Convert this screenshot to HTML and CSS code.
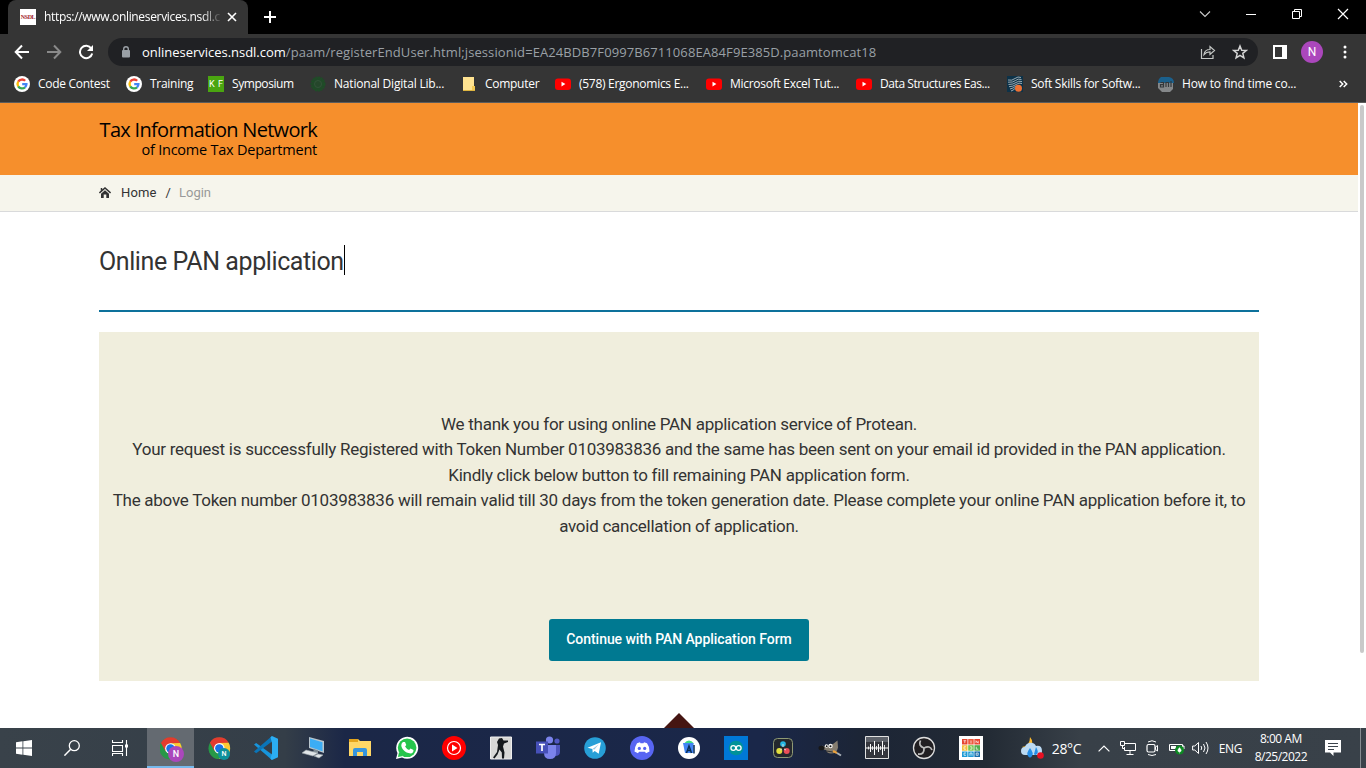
FILE: index.html
```html
<!DOCTYPE html>
<html lang="en">
<head>
<meta charset="utf-8">
<title>Online PAN application</title>
<link rel="stylesheet" href="styles.css">
</head>
<body>
<svg class="defs" width="0" height="0">
  <symbol id="google" viewBox="0 0 16 16"><circle cx="8" cy="8" r="8" fill="#fff"/><g fill="none" stroke-width="2.3"><path d="M11.2 4.8A4.5 4.5 0 0 0 4.2 5.7" stroke="#ea4335"/><path d="M4.2 5.7A4.5 4.5 0 0 0 4.2 10.3" stroke="#fbbc05"/><path d="M4.2 10.3A4.5 4.5 0 0 0 11 11.3" stroke="#34a853"/><path d="M11 11.3A4.5 4.5 0 0 0 12.4 8.2H8.2" stroke="#4285f4"/></g></symbol>
  <symbol id="youtube" viewBox="0 0 16 16"><rect y="2.5" width="16" height="11.5" rx="3" fill="#f00"/><path d="M6.5 5.8v4.6L10.4 8z" fill="#fff"/></symbol>
  <symbol id="chrome" viewBox="0 0 24 24"><circle cx="12" cy="12" r="11.5" fill="#279847"/><path d="M2 6.2A11.5 11.5 0 0 1 22 6.2L12 7 7 15z" fill="#e33b2e"/><path d="M22 6.2A11.5 11.5 0 0 1 12 23.5L17 14 12 6.4z" fill="#fcc934"/><circle cx="12" cy="12" r="5.6" fill="#fff"/><circle cx="12" cy="12" r="4.4" fill="#1a73e8"/></symbol>
</svg>

<header class="browser">
  <div class="tabstrip">
    <div class="tab">
      <span class="favicon">NSDL</span>
      <span class="tab-title">https://www.onlineservices.nsdl.c</span>
      <svg class="tab-close" width="10" height="10" viewBox="0 0 10 10"><path d="M1 1l8 8M9 1L1 9" stroke="#fff" stroke-width="1.6"/></svg>
    </div>
    <svg class="new-tab" width="12" height="12" viewBox="0 0 12 12"><path d="M6 0v12M0 6h12" stroke="#fff" stroke-width="2"/></svg>
    <div class="window-controls">
      <svg width="46" height="28" viewBox="0 0 46 28"><path d="M18 11.500l5 5 5-5" fill="none" stroke="#ccc" stroke-width="1.1"/></svg>
      <svg width="46" height="28" viewBox="0 0 46 28"><path d="M18 14.500h10" stroke="#fff"/></svg>
      <svg width="46" height="28" viewBox="0 0 46 28"><path d="M18.500 11.500h7v7h-7zM20.500 11.500v-2h7v7h-2" fill="none" stroke="#fff"/></svg>
      <svg width="46" height="28" viewBox="0 0 46 28"><path d="M18 9l10 10M28 9L18 19" stroke="#fff" stroke-width="1.2"/></svg>
    </div>
  </div>
  <div class="toolbar">
    <svg class="nav" width="16" height="16" viewBox="0 0 16 16"><path d="M15 8H2M8 1.500L1.700 8 8 14.500" fill="none" stroke="#fff" stroke-width="2"/></svg>
    <svg class="nav" width="16" height="16" viewBox="0 0 16 16"><path d="M1 8h13M8 1.500L14.300 8 8 14.500" fill="none" stroke="#8a8a8a" stroke-width="2"/></svg>
    <svg class="nav" width="16" height="16" viewBox="0 0 16 16"><path d="M13.300 4.500A6.200 6.200 0 1 0 14.200 9.500" fill="none" stroke="#fff" stroke-width="2"/><path d="M15 1v6H9z" fill="#fff"/></svg>
    <div class="omnibox">
      <svg width="10" height="12" viewBox="0 0 10 12"><rect x="1" y="4" width="8" height="7.500" rx="1" fill="#9aa0a6"/><path d="M2.700 5V3a2.300 2.300 0 0 1 4.600 0v2" fill="none" stroke="#9aa0a6" stroke-width="1.400"/></svg>
      <span class="url"><b>onlineservices.nsdl.com</b>/paam/registerEndUser.html;jsessionid=EA24BDB7F0997B6711068EA84F9E385D.paamtomcat18</span>
      <svg width="16" height="16" viewBox="0 0 16 16"><path d="M1.500 5v9.500H13V11M4 10.500C4.500 7 7 5.500 10 5.500V2.500l4.500 4-4.500 4V7.800C7 7.800 5.500 8.700 4 10.500z" fill="none" stroke="#c4c7c5" stroke-width="1.200"/></svg>
      <svg width="16" height="16" viewBox="0 0 16 16"><path d="M8 2l1.700 4.200 4.600.3-3.500 2.900 1.100 4.400L8 11.400l-3.900 2.400 1.100-4.400L1.700 6.500l4.600-.3z" fill="none" stroke="#d5d5d5" stroke-width="1.500"/></svg>
    </div>
    <svg class="side-panel" width="14" height="14" viewBox="0 0 14 14"><path d="M1 1h12v12H1z" fill="none" stroke="#fff" stroke-width="2"/><path d="M9 0h5v14H9z" fill="#fff"/></svg>
    <span class="avatar">N</span>
    <svg class="menu" width="4" height="16" viewBox="0 0 4 16"><g fill="#fff"><circle cx="2" cy="3" r="1.500"/><circle cx="2" cy="8" r="1.500"/><circle cx="2" cy="13" r="1.500"/></g></svg>
  </div>
  <nav class="bookmarks">
    <span class="bookmark"><svg><use href="#google"/></svg>Code Contest</span>
    <span class="bookmark"><svg><use href="#google"/></svg>Training</span>
    <span class="bookmark snug"><span class="kf">K F</span>Symposium</span>
    <span class="bookmark loose"><svg viewBox="0 0 16 16"><circle cx="8" cy="8" r="6" fill="#25472b" stroke="#1e4d27" stroke-width="3" stroke-dasharray="2 .5"/><circle cx="8" cy="8" r="3.500" fill="none" stroke="#315339"/></svg>National Digital Lib...</span>
    <span class="bookmark"><svg viewBox="0 0 16 16"><path d="M2 1h11v9h1v5H2z" fill="#ffe391"/><path d="M11 14v-4h3v4z" fill="#f3ca54"/><path d="M2 14.500h12" stroke="#dfb641"/></svg>Computer</span>
    <span class="bookmark"><svg><use href="#youtube"/></svg>(578) Ergonomics E...</span>
    <span class="bookmark"><svg><use href="#youtube"/></svg>Microsoft Excel Tut...</span>
    <span class="bookmark snug"><svg><use href="#youtube"/></svg>Data Structures Eas...</span>
    <span class="bookmark"><svg viewBox="0 0 16 16"><path d="M0 0h16v16H0z" fill="#0d3248"/><path d="M1 4q4 1 7-1.500t6-1M1 6.200q5 .5 7.500-1.700t6-1M1.500 8.500q5 0 7.500-2t6-1M2 10.700q4 0 7-2.200t6-1M3 13q3-.5 6-3M4 15q2-.5 4-2.500" fill="none" stroke="#a9b6bc" stroke-width=".9"/><circle cx="11.500" cy="12.300" r="3.500" fill="#f07132"/></svg>Soft Skills for Softw...</span>
    <span class="bookmark loose"><svg viewBox="0 0 16 16"><path d="M3 1h8q5 1 5 6H0q0-4 3-6z" fill="#1b608c"/><path d="M0 7h15v6l-3 3H4l-4-4z" fill="#85888a"/><path d="M2.500 6.500h3V11h-3V8.700h3M8 11V6.500h2.500V11M13 5v6" fill="none" stroke="#33383c" stroke-width="1.200"/></svg>How to find time co...</span>
    <svg class="overflow" viewBox="0 0 9 8"><path d="M.7 1L3.700 4 .7 7M4.700 1l3 3-3 3" fill="none" stroke="#fff" stroke-width="1.500"/></svg>
  </nav>
</header>

<div class="viewport">
  <main class="page">
    <div class="masthead">
      <div class="brand"><span class="brand-name">Tax Information Network</span><span class="brand-sub">of Income Tax Department</span></div>
    </div>
    <nav class="crumbs">
      <svg width="12" height="11" viewBox="0 0 12 11"><path d="M.4 6L6 1l5.600 5M2.500 1v3" fill="none" stroke="#333" stroke-width="1.500"/><path d="M2 6.700L6 3.200l4 3.500V11H7.300V7.500H4.700V11H2z" fill="#333"/></svg>
      <span class="crumb-home">Home</span><span class="crumb-sep">/</span><span class="crumb-login">Login</span>
    </nav>
    <section class="content">
      <h1 class="title">Online PAN application<span class="caret"></span></h1>
      <div class="panel">
        <p class="message">We thank you for using online PAN application service of Protean.<br>Your request is successfully Registered with Token Number 0103983836 and the same has been sent on your email id provided in the PAN application.<br>Kindly click below button to fill remaining PAN application form.<br>The above Token number 0103983836 will remain valid till 30 days from the token generation date. Please complete your online PAN application before it, to<br>avoid cancellation of application.</p>
        <button class="continue">Continue with PAN Application Form</button>
      </div>
      <div class="footer-arrow"></div>
    </section>
  </main>
  <div class="scrollbar"><div class="thumb"></div></div>
</div>

<footer class="taskbar">
  <div class="system">
    <svg width="16" height="16" viewBox="0 0 16 16"><path d="M0 2.200L6.500 1.300V7.600H0zM7.300 1.200L16 0v7.600H7.300zM0 8.400h6.500v6.300L0 13.800zM7.300 8.400H16V16l-8.700-1.200z" fill="#fff"/></svg>
    <svg width="16" height="16" viewBox="0 0 16 16"><circle cx="10.300" cy="5.700" r="5" fill="none" stroke="#fff" stroke-width="1.300"/><path d="M6.700 9.300L.4 15.600" stroke="#fff" stroke-width="1.500"/></svg>
    <svg width="17" height="16" viewBox="0 0 17 16"><path d="M.5 0v2.500h10V0M.5 16v-2.500h10V16M.5 5.500h10v6H.5zM14.500 0v16" fill="none" stroke="#fff" stroke-width="1.100"/><path d="M13 4.500h3v3h-3z" fill="#fff"/></svg>
  </div>
  <div class="apps">
    <span class="app active"><svg viewBox="0 0 24 24"><g transform="translate(-1 1) scale(.96)"><use href="#chrome" width="24" height="24"/></g></svg><i class="profile purple">N</i></span>
    <span class="app"><svg viewBox="0 0 24 24"><g transform="translate(1 1) scale(.94)"><use href="#chrome" width="24" height="24"/></g></svg><i class="profile teal">N</i></span>
    <span class="app"><svg viewBox="0 0 24 24"><path d="M0 8.500L2.200 7 18 18.500V24z" fill="#1795dc"/><path d="M0 15.500L2.200 17.300 18 5.500V0z" fill="#0a75b8"/><path d="M18 0l6 2.800v18.400L18 24l-1.500-1.200L18 17V7l-1.500-5.800z" fill="#2badf2"/></svg></span>
    <span class="app"><svg viewBox="0 0 24 24"><path d="M8 1l15 4v12L8 12z" fill="#b8c5cd"/><path d="M9 2.500l12.500 3.700v9L9 11z" fill="#3cadf5"/><path d="M13 13l4 1.500v3l-5-1z" fill="#7e8b94"/><path d="M5 14l12 3-5 3L1 17zM17 18l5 1-4 3-5-2z" fill="#e0e5e8" stroke="#9aa4aa" stroke-width=".6"/></svg></span>
    <span class="app"><svg viewBox="0 0 24 24"><path d="M1 3h9l2 2h11v15H1z" fill="#ffd766"/><path d="M1 3h9v3H1z" fill="#e5a51c"/><path d="M5 20v-6q0-2 2-2h10q2 0 2 2v6h-4v-4H9v4z" fill="#3795dd"/></svg></span>
    <span class="app"><svg viewBox="0 0 24 24"><path d="M1 23l1.500-6A11 11 0 1 1 7 21.500z" fill="#fff"/><circle cx="12.100" cy="11.800" r="9.300" fill="#25c54c"/><path d="M3 21l1-5 4 4z" fill="#25c54c"/><path d="M8 6h2l1.300 3-1.200 1.500q1.400 2.500 4 3.500l1.400-1.400 3 1.400q0 3.300-3 3.500C10 17 6 12 6.300 9Q6.500 7 8 6z" fill="#fff"/></svg></span>
    <span class="app"><svg viewBox="0 0 24 24"><circle cx="12" cy="12" r="12" fill="#f00"/><circle cx="12" cy="12" r="6.500" fill="none" stroke="#fff" stroke-width="1.200"/><path d="M10 8.500v7l5.500-3.500z" fill="#fff"/></svg></span>
    <span class="app"><svg viewBox="0 0 24 24"><path d="M1.500 1h21v22h-21z" fill="#d8d8d6" stroke="#eee"/><path d="M10 2.500l3-.5 1.500 2.500H19V6l-4 1.500-1 3 1.500 6-.5 6h-2l-.2-6-2.300-3-2 5-3 4-1.500-1L8 16l1-7-1-3z" fill="#15191c"/></svg></span>
    <span class="app"><svg viewBox="0 0 24 24"><circle cx="21" cy="5" r="2.600" fill="#5259c4"/><circle cx="13.500" cy="4" r="3.600" fill="#7b83eb"/><path d="M17 9h7v7q0 4-5 4h-2z" fill="#4e55bd"/><path d="M8 9h12v8q0 6-6 6t-6-6z" fill="#7b83eb"/><path d="M0 5.500h12v12H0z" fill="#4650b8"/><path d="M3 8.500h6M6 8v7" stroke="#fff" stroke-width="1.700"/></svg></span>
    <span class="app"><svg viewBox="0 0 24 24"><circle cx="12" cy="12" r="10.800" fill="#279fd7"/><path d="M4.500 11.800L18 6.200l-2.300 11.600-4-2.900-2 1.900-.3-3.700-4.900-1.300z" fill="#fff"/><path d="M9.500 13l6-4.500-4 5z" fill="#9bc9e3"/></svg></span>
    <span class="app"><svg viewBox="0 0 24 24"><circle cx="12" cy="12" r="12" fill="#5865f2"/><path d="M7 7.300l3-1 .5 1h3l.5-1 3 1q3 4 2.500 8.300l-3.500 1.700-1-1.500H9l-1 1.500-3.500-1.700Q4.500 11 7 7.300z" fill="#fff"/><circle cx="9.300" cy="12.400" r="1.600" fill="#5865f2"/><circle cx="14.700" cy="12.400" r="1.600" fill="#5865f2"/></svg></span>
    <span class="app"><svg viewBox="0 0 24 24"><circle cx="12" cy="12" r="11" fill="#fff"/><path d="M7 7.500q5-6 10 0z" fill="#3ddc84"/><path d="M6 7h10.500v10H8z" fill="#4285f4"/><path d="M9.500 17l2.500-7 2.500 7M10.500 14.500h3M17 9v8.500" fill="none" stroke="#082d55" stroke-width="1.500"/></svg></span>
    <span class="app"><svg viewBox="0 0 24 24"><path d="M0 0h24v24H0z" fill="#0078d7"/><circle cx="12" cy="12" r="7.300" fill="#009299"/><g fill="none" stroke="#fff" stroke-width="1.300"><circle cx="9.300" cy="12" r="2.400"/><circle cx="14.700" cy="12" r="2.400"/></g></svg></span>
    <span class="app"><svg viewBox="0 0 24 24"><rect x="2.500" y="2.500" width="19" height="19" rx="4" fill="#24282d" stroke="#8f9a74"/><circle cx="12" cy="8" r="2.800" fill="#24b7e4"/><circle cx="8.300" cy="15" r="3" fill="#e2df3e"/><circle cx="15.700" cy="15" r="3" fill="#eb4e57"/><path d="M12 8v3M9 14l2-1M15 14l-2-1" stroke="#ddd"/></svg></span>
    <span class="app"><svg viewBox="0 0 24 24"><path d="M1 11.500q3-3 6-1l4-1 4-1.500 4.500-3.500.5 7q-1 6-7 6-4 0-5-3.500l-5-1z" fill="#857d70"/><ellipse cx="3.500" cy="12" rx="3" ry="2.300" fill="#171717"/><circle cx="8.500" cy="10" r="1.800" fill="#f8f8f8"/><circle cx="12.500" cy="10" r="2.200" fill="#f8f8f8"/><circle cx="8.700" cy="10.200" r=".9" fill="#111"/><circle cx="12.500" cy="10.200" r="1" fill="#111"/><path d="M8 15l7 1" stroke="#333"/><path d="M15 15l4 2" stroke="#eda23a" stroke-width="2"/><path d="M19 17l4 2.500" stroke="#a9b1b8" stroke-width="2"/></svg></span>
    <span class="app"><svg viewBox="0 0 24 24"><path d="M.5.500h23v22H.5z" fill="#34363d" stroke="#e1e1e1"/><path d="M1 1h22v5H1z" fill="#5d6169"/><path d="M1 12h22M5.500 8v8M9.500 5v14M13.500 8v8M17.500 5v14" stroke="#fff" stroke-width="1"/><path d="M3.500 10.500v3M7.500 10v4M11.500 10v4M15.500 10v4M19.500 9v6" stroke="#fff" stroke-width=".8"/></svg></span>
    <span class="app"><svg viewBox="0 0 24 24"><circle cx="12" cy="12" r="10.500" fill="#211f22" stroke="#ddd" stroke-width="1.300"/><path d="M12 12Q6 10 8.500 4.500M12 12q6-3 8 2M12 12q.5 7-6 6" fill="none" stroke="#bbb" stroke-width="1.800"/></svg></span>
    <span class="app"><svg viewBox="0 0 24 24"><path d="M0 0h24v24H0z" fill="#fff"/><path d="M3 3h5.500v5.500H3z" fill="#e64531"/><path d="M9.200 3h5.500v5.500H9.200z" fill="#ef5b3f"/><path d="M15.400 3H21v5.500h-5.600z" fill="#e8402b"/><path d="M3 9.200h5.500v5.500H3z" fill="#f3bd3a"/><path d="M9.200 9.200h5.500v5.500H9.200z" fill="#75c44a"/><path d="M15.400 9.200H21v5.500h-5.600z" fill="#51ad4e"/><path d="M3 15.400h5.500V21H3zM9.200 15.400h5.500V21H9.200z" fill="#1e9bd5"/><path d="M15.400 15.400H21V21h-5.600z" fill="#186da9"/><path d="M4.500 4.700h2.600M5.800 4.700v2.500M12 4.500v3M17 7.200V4.700l2.200 2.500V4.700M7 10.800H5v2.400h2M10.900 10.800h2v2.400h-2M17.300 10.800v2.400h2M7 17H5v2.300h2M11 19.700V17h2v2.700M17.200 17h2v2.300h-2z" fill="none" stroke="#fff" stroke-width=".7"/></svg></span>
  </div>
  <div class="tray">
    <svg class="weather" width="24" height="24" viewBox="0 0 24 24"><path d="M9 1q5 6-1 10-4 2-7 0 8-1 8-10z" fill="#fdba2e"/><path d="M4 19a4 4 0 0 1 0-8 6 6 0 0 1 11-1q6-1 6 5 0 4-4 4z" fill="#bcdaf3"/><path d="M9 12q4 5 2 8t-4 0 2-8zM15 11q3 5 1 7t-3 0z" fill="#258fe8"/><circle cx="19.500" cy="19.500" r="3.300" fill="#e81123"/></svg>
    <span class="temp">28°C</span>
    <svg class="chevron" width="12" height="7" viewBox="0 0 12 7"><path d="M.6 6.400L6 1l5.400 5.400" fill="none" stroke="#fff" stroke-width="1.200"/></svg>
    <svg class="net" width="17" height="14" viewBox="0 0 17 14"><path d="M5 2.500h10.500v7H4.500V6M10 9.500v4M6.500 13.500h7M.5.500h4v4h-4zM2.500 4.500v3h2" fill="none" stroke="#fff"/></svg>
    <svg class="meet" width="13" height="16" viewBox="0 0 13 16"><rect x="1" y="4.500" width="8" height="7.500" rx="1.500" fill="none" stroke="#fff" stroke-width="1.200"/><path d="M9.500 7l2-1.500v5.500l-2-1.500zM2 2q4-2.500 8 0M2 14.500q4 2 8 0" fill="none" stroke="#fff"/></svg>
    <svg class="battery" width="16" height="14" viewBox="0 0 16 14"><path d="M.5 3.500h13v6H.5zM14 5h1v3h-1" fill="none" stroke="#fff"/><path d="M2 5h5v3H2z" fill="#fff"/><circle cx="10.500" cy="9" r="4.500" fill="#0d8a22"/><path d="M10.500 6.500q3.500 4 0 4.500-3.500-.5 0-4.500zM10.500 8v4.500" fill="#fff" stroke="#fff" stroke-width=".4"/></svg>
    <svg class="volume" width="17" height="14" viewBox="0 0 17 14"><path d="M.6 5h2.200L6.500 1.500v11L2.800 9H.6zM9 5q1.500 2 0 4M11.500 3q3 4 0 8M14 1q4 6 0 12" fill="none" stroke="#fff"/></svg>
    <span class="lang">ENG</span>
    <span class="clock"><span>8:00 AM</span><span>8/25/2022</span></span>
    <svg class="notice" width="16" height="16" viewBox="0 0 16 16"><path d="M0 0h16v12.500H8.500V16L5 12.500H0z" fill="#fff"/><path d="M3 3.500h10M3 6.500h10M3 9.500h6" stroke="#3c444c"/></svg>
    <span class="show-desktop"></span>
  </div>
</footer>
</body>
</html>
```
FILE: styles.css
```css
* { box-sizing: border-box; }
body { margin: 0; width: 1366px; height: 768px; overflow: hidden; display: flex; flex-direction: column; background: #fff; font-family: Roboto, sans-serif; color: #333; }
svg { display: block; flex: none; }
.defs { position: absolute; }

.browser { height: 103px; flex: none; background: #353535; border-bottom: 1px solid #5c5c5c; font-family: "Open Sans", "Noto Sans", sans-serif; color: #fff; }
.tabstrip { height: 34px; background: #000; display: flex; padding-left: 8px; }
.tab { width: 240px; height: 34px; background: #353535; border-radius: 8px 8px 0 0; display: flex; align-items: center; padding: 0 11px 0 12px; }
.favicon { width: 16px; height: 16px; background: #fff; color: #a31e28; font: bold 6px/16px "Liberation Serif", serif; letter-spacing: -0.4px; text-align: center; }
.tab-title { margin-left: 8px; width: 176px; font-size: 12px; line-height: 16px; letter-spacing: -0.33px; white-space: nowrap; -webkit-mask-image: linear-gradient(90deg, #000 158px, transparent 178px); mask-image: linear-gradient(90deg, #000 158px, transparent 178px); }
.tab-close { margin-left: 7px; }
.new-tab { margin: 11px 0 0 16px; }
.window-controls { display: flex; margin-left: auto; }
.toolbar { height: 36px; display: flex; align-items: center; padding-left: 14px; }
.nav { margin-right: 16px; }
.omnibox { width: 1150px; height: 28px; margin-left: -2px; border-radius: 14px; background: #202124; display: flex; align-items: center; padding: 0 10px 0 13px; }
.omnibox svg + svg { margin-left: 16px; }
.url { flex: 1; margin-left: 11px; font-size: 13px; letter-spacing: 0.09px; color: #9aa0a6; white-space: nowrap; }
.url b { font-weight: 400; letter-spacing: -0.02px; color: #fff; }
.side-panel { margin-left: 15px; }
.avatar { width: 22px; height: 22px; margin-left: 14px; border-radius: 50%; background: #ab47bc; font: 12px/22px Roboto, sans-serif; text-align: center; }
.menu { margin-left: 20px; }
.bookmarks { height: 28px; padding-left: 14px; display: grid; grid-template-columns: 112px 82px 102px 151px 94px 151px 150px 151px 151px 181px 9px; align-items: center; }
.bookmark { display: flex; align-items: center; gap: 8px; font-size: 12px; line-height: 16px; letter-spacing: -0.28px; white-space: nowrap; }
.snug { letter-spacing: -0.42px; }
.loose { letter-spacing: -0.2px; }
.bookmark svg { width: 16px; height: 16px; }
.kf { width: 16px; height: 16px; background: #4aa510; font: 9px/16px Roboto, sans-serif; letter-spacing: 0; word-spacing: 1px; text-align: center; }
.overflow { width: 9px; height: 8px; }

.viewport { flex: 1; min-height: 0; display: flex; }
.page { flex: 1; overflow: hidden; }
.scrollbar { width: 8px; padding: 2px 2px 0; background: #fff; }
.thumb { height: 548px; border-radius: 2px; background: #c9c9c9; }
.masthead { height: 72px; padding: 14px 0 0 99px; background: #f68f2c; }
.brand { width: 218px; display: flex; flex-direction: column; align-items: flex-end; font-family: "Open Sans", "Noto Sans", sans-serif; color: #000; white-space: nowrap; }
.brand-name { font-size: 20px; line-height: 25px; letter-spacing: -0.7px; }
.brand-sub { font-size: 14.5px; line-height: 15px; letter-spacing: -0.23px; }
.crumbs { height: 37px; padding: 0 0 2px 99px; display: flex; align-items: center; background: #f6f5ec; border-bottom: 1px solid #d9dadb; font-size: 13px; }
.crumbs span { padding-top: 1px; }
.crumb-home { margin-left: 10px; letter-spacing: 0.15px; }
.crumb-sep { margin: 0 8px 0 9px; }
.crumb-login { color: #999; }
.content { padding: 0 99px; }
.title { height: 100px; margin: 0 0 20px; padding-top: 34px; border-bottom: 2px solid #0d719b; display: flex; font-size: 25px; font-weight: 400; line-height: 31px; letter-spacing: -0.41px; }
.caret { width: 1px; height: 30px; margin-top: -1px; background: #000; }
.panel { height: 349px; padding-top: 79.75px; background: #f0eedd; display: flex; flex-direction: column; align-items: center; }
.message { margin: 0; font-size: 17px; line-height: 25.5px; letter-spacing: -0.264px; text-align: center; white-space: nowrap; }
.continue { width: 260px; height: 42px; margin: 79.75px 0 0; padding: 0 0 2px; border: 0; border-radius: 3px; background: #007991; color: #fff; font: 500 14px Roboto, sans-serif; letter-spacing: -0.05px; }
.footer-arrow { width: 30px; height: 15px; margin: 32px auto 0; background: #451512; clip-path: polygon(50% 0, 100% 100%, 0 100%); }

.taskbar { height: 40px; flex: none; display: flex; background: linear-gradient(90deg, #39424a 0, #343e48 285px, #1b2747 345px, #1a2749 760px, #1c2536 860px, #222a34 985px, #384048 1080px, #394149 100%); color: #fff; font-family: "Open Sans", "Noto Sans", sans-serif; }
.system { width: 147px; display: grid; grid-template-columns: repeat(3, 48px); place-items: center; }
.apps { display: flex; }
.app { position: relative; width: 47.06px; height: 40px; padding-left: 2px; display: flex; align-items: center; justify-content: center; }
.app svg { width: 24px; height: 24px; }
.active { background: #646a71; border-bottom: 2px solid #76b9ed; padding-top: 2px; }
.profile { position: absolute; border-radius: 50%; text-align: center; font-family: Roboto, sans-serif; font-style: normal; font-weight: 500; }
.purple { left: 21px; top: 18px; width: 16px; height: 16px; background: #ab47bc; font-size: 9px; line-height: 16px; }
.teal { left: 24px; top: 20px; width: 12px; height: 12px; background: #0e919b; font-size: 7px; line-height: 12px; }
.tray { display: flex; align-items: center; margin-left: 27px; width: 345px; }
.temp { margin-left: 7px; width: 46px; font-size: 14px; letter-spacing: -0.4px; }
.net { margin-left: 10px; }
.meet { margin-left: 9px; }
.battery { margin-left: 10px; }
.volume { margin-left: 7px; }
.lang { margin-left: 10px; width: 24px; font-size: 12px; letter-spacing: -0.4px; }
.clock { width: 76px; display: flex; flex-direction: column; text-align: center; font-size: 12px; line-height: 18px; letter-spacing: -0.5px; }
.notice { margin-left: 6px; }
.show-desktop { width: 1px; height: 40px; margin-left: 19px; background: #858b90; }
```
